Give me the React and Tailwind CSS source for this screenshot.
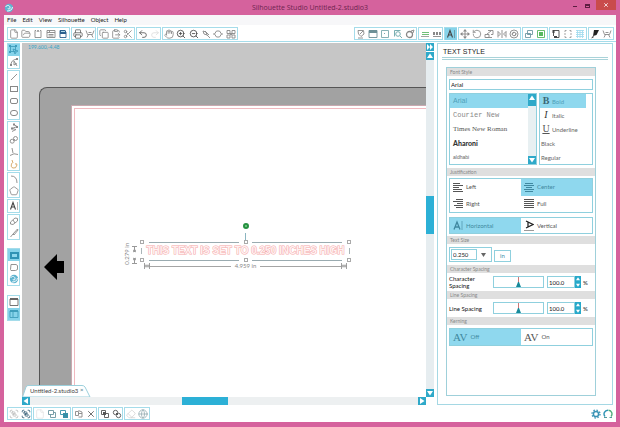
import React, { useState } from "react";
import {
  File, FolderOpen, Printer, Copy, ClipboardPaste, Scissors, Undo2, Redo2, Hand,
  ZoomIn, ZoomOut, RotateCcw, Pentagon, Group, Ungroup, X, Globe, Eraser,
} from "lucide-react";

const ui = "font-['Lato','Open_Sans',sans-serif]";

function Tool({ icon: Icon, label, on, tone = "text-[#888]", children }) {
  return (
    <button
      aria-label={label}
      className={`flex h-3 min-w-3 items-center justify-center ${tone} ${on ? "bg-[#86d3ea]" : ""}`}
    >
      {Icon ? <Icon size={10} strokeWidth={2} /> : children}
    </button>
  );
}

function Glyph({ d, fill, children }) {
  return (
    <svg width="10" height="10" viewBox="0 0 10 10" fill="none" stroke="currentColor" strokeWidth="0.900">
      {fill && <path d={fill} fill="currentColor" stroke="none" />}
      {d && <path d={d} />}
      {children}
    </svg>
  );
}

function Bar({ width, children }) {
  return (
    <div className={`flex h-[13px] shrink-0 items-center justify-around border border-[#a5dcea] bg-white ${width}`}>
      {children}
    </div>
  );
}

function Stack({ children, className = "" }) {
  return <div className={`flex flex-col border border-[#a5dcea] bg-white ${className}`}>{children}</div>;
}

const Plotter = () => <Glyph d="M1 1.500l1.500 4h5l1.500-4M3.500 5.500L2 8.500M6.500 5.500L8 8.500M3.500 3.500h3" />;
const LetterTool = () => (
  <svg width="10" height="10" viewBox="0 0 10 10" fill="none" stroke="#444">
    <path d="M1.500 8.500L4 1.500l2.500 7M2.500 6h3" strokeWidth="1.100" />
    <path d="M8.500 1v8" strokeWidth="0.400" />
  </svg>
);
const Swirl = () => (
  <svg width="10" height="10" viewBox="0 0 10 10">
    <circle cx="5" cy="5" r="4.200" fill="#5fb4d0" />
    <path d="M1.500 4c2-3 5-1 4.500 1s-2 1-2 0M3 8c3 0 5-1 5.500-4" stroke="#fff" fill="none" strokeWidth="0.900" />
  </svg>
);

function TopTools() {
  return (
    <div className="flex h-[17px] shrink-0 items-start justify-between border-b border-[#a5dcea] pt-0.5 pr-0.5 pl-[3px]">
      <div className="flex gap-px">
        <Bar width="w-[63px]">
          <Tool icon={File} label="New" />
          <Tool icon={FolderOpen} label="Open" />
          <Tool label="Import"><Glyph d="M2 1.500h1M7 1.500h1v7H2v-7M4 3l1-2 1 2" /></Tool>
          <Tool label="Save"><Glyph d="M1 1.500h8v7H1zM1 3.500h8M2.500 5.500h5M2.500 7h5M3.500 1.500v2" /></Tool>
          <Tool label="Save to card" tone="text-[#2b5f8d]">
            <Glyph d="M2 1.500h4.500L8 3v5.500H2z" fill="M2 1h5l1 1v3H2z">
              <path d="M3 2.500h4" stroke="#bfe3f2" />
            </Glyph>
          </Tool>
        </Bar>
        <Bar width="w-[25px]">
          <Tool icon={Printer} label="Print" tone="text-[#666]" />
          <Tool label="Send to plotter"><Plotter /></Tool>
        </Bar>
        <Bar width="w-[38px]">
          <Tool icon={Copy} label="Copy" />
          <Tool icon={ClipboardPaste} label="Paste" />
          <Tool icon={Scissors} label="Cut" />
        </Bar>
        <Bar width="w-[25px]">
          <Tool icon={Undo2} label="Undo" tone="text-[#555]" />
          <Tool icon={Redo2} label="Redo" tone="text-[#ddd]" />
        </Bar>
        <Bar width="w-[76px]">
          <Tool icon={Hand} label="Pan" />
          <Tool icon={ZoomIn} label="Zoom in" tone="text-[#444]" />
          <Tool icon={ZoomOut} label="Zoom out" tone="text-[#444]" />
          <Tool label="Zoom selection"><Glyph d="M2 2l3 1 1 3-3-1zM6 6l3 3M4 2l4 4" /></Tool>
          <Tool label="Drag zoom"><Glyph d="M3.500 2h3l2 3-2 3h-3l-2-3zM1.500 5H0M10 5H8.500" /></Tool>
          <Tool label="Fit to window">
            <Glyph d="M1 1.500h3v3H1zM6 1.500h3v3H6zM1 6h3v3H1zM6 6h3v3H6zM4 4l2 2M6 4L4 6" />
          </Tool>
        </Bar>
      </div>
      <div className="flex gap-px">
        <Bar width="w-[63px]">
          <Tool label="Fill"><Glyph d="M2 1.500h5.500L8 5 5 7.500 2.500 5zM2 9h5M4 5l3-3" /></Tool>
          <Tool label="Page setup" tone="text-[#6d9097]"><Glyph d="M1 1.500h8v7H1z" fill="M1 1h8v3H1z" /></Tool>
          <Tool label="Grid" tone="text-[#7aa9ae]"><Glyph d="M1.500 1.500h7v7h-7z" fill="M4 4h1v1H4z" /></Tool>
          <Tool label="Trace" tone="text-[#6aa5a8]">
            <Glyph d="M1.500 1.500h6M1.500 1.500v6M7 7l2 2"><circle cx="5" cy="5" r="2.300" /></Glyph>
          </Tool>
          <Tool label="Offset"><Glyph d="M6 2l3-1-1 3"><circle cx="4.500" cy="5.500" r="3" strokeWidth="1.300" /></Glyph></Tool>
        </Bar>
        <Bar width="w-[25px]">
          <Tool label="Line color" tone="text-[#6fbf78]">
            <Glyph fill="M2 3h7v1H2zM2 5h7v1H2z"><path d="M1 7.500h8" stroke="#999" /></Glyph>
          </Tool>
          <Tool label="Line style"><Glyph d="M1 7.500h8" fill="M1 3h2v3H1zM4 3h2v3H4zM7 3h2v3H7z" /></Tool>
        </Bar>
        <Bar width="w-[13px]">
          <Tool label="Text style" on><LetterTool /></Tool>
        </Bar>
        <Bar width="w-[63px]">
          <Tool label="Move">
            <Glyph d="M5 2v6M2 5h6" fill="M5 0l2 2.500H3zM5 10l2-2.500H3zM0 5l2.500-2v4zM10 5L7.500 3v4z" />
          </Tool>
          <Tool icon={RotateCcw} label="Rotate" />
          <Tool label="Scale"><Glyph d="M1 5.500h4v3H1zM4 1.500h5v4H7M3 5l4-3M2 8.500h6" /></Tool>
          <Tool label="Align"><Glyph d="M1 2v6.500M9 2v6.500M5 1v8M1.500 3l2 2-2 2M8.500 3l-2 2 2 2" /></Tool>
          <Tool label="Replicate">
            <Glyph d="M3 5.500l2-2.500M5.500 7l2-2.500"><circle cx="5" cy="5" r="4" /><circle cx="5" cy="5" r="1.800" /></Glyph>
          </Tool>
        </Bar>
        <Bar width="w-[26px]">
          <Tool label="Modify" tone="text-[#6f98a4]"><Glyph d="M3.500 1.500h5v4h-5zM1.500 4.500h5v4h-5z" fill="M3.500 4.500h3v1h-3z" /></Tool>
          <Tool label="Nest" tone="text-[#58b85f]"><Glyph d="M1.500 1.500h7v7h-7z" fill="M3 3h4v4H3z" /></Tool>
        </Bar>
        <Bar width="w-[38px]">
          <Tool label="Registration" tone="text-[#444]"><Glyph d="M3 1.500h5v7H4M2.500 3v4" fill="M1.500 1h2v3h-2zM3 7h3v2H3z" /></Tool>
          <Tool label="Cut border" tone="text-[#999]"><Glyph d="M2 3V1.500h1.500M6.500 1.500H8V3M8 7v1.500H6.500M3.500 8.500H2V7M2 4v2M8 4v2" /></Tool>
          <Tool label="Grid settings" tone="text-[#a5dcee]">
            <Glyph d="M1 1.500h8M1 3.500h8M1 5.500h8M1 7.500h8M2.500 1v8M5 1v8M7.500 1v8" />
          </Tool>
        </Bar>
        <Bar width="w-[26px]">
          <Tool label="Cut settings" tone="text-[#222]"><Glyph fill="M4 1h5L6.500 6 3 7zM3 7l1 1-3 1.500z" /></Tool>
          <Tool label="Cut"><Plotter /></Tool>
        </Bar>
      </div>
    </div>
  );
}

function SideTools() {
  return (
    <div className="flex w-[18px] shrink-0 flex-col pr-[2px] pl-[3px]">
      <div className="flex w-[13px] flex-col gap-px">
        <Stack>
          <Tool label="Select" on tone="text-[#3f9dbb]">
            <Glyph d="M1.500 1.500h5v5h-5zM4 4l5 2-2 1-1 2z" fill="M0 0h2v2H0zM6 0h2v2H6zM0 6h2v2H0z" />
          </Tool>
          <Tool label="Edit points">
            <Glyph d="M2 8.500Q1.500 3 8 2M5 4l3 5M5 4v4l3-1.500" fill="M1 7h2v2H1zM7 1h2v2H7z" />
          </Tool>
        </Stack>
        <Stack>
          <Tool label="Line"><Glyph d="M2 8l6-6" /></Tool>
          <Tool label="Rectangle"><span className="h-[6px] w-2 border border-[#888]" /></Tool>
          <Tool label="Rounded rectangle"><span className="h-[6px] w-2 rounded-[2px] border border-[#888]" /></Tool>
          <Tool label="Ellipse"><span className="h-[6px] w-2 rounded-full border border-[#888]" /></Tool>
        </Stack>
        <Stack>
          <Tool label="Polygon"><Glyph d="M5 1.500l3 2-5 2 4 1-4 2" fill="M4 0.500h2v2H4zM7 3h2v2H7zM2 4.500h2v2H2z" /></Tool>
          <Tool label="Curve">
            <Glyph d="M4 5.500l2-1"><circle cx="3.200" cy="6.200" r="2" /><circle cx="6.500" cy="3.500" r="2" /></Glyph>
          </Tool>
          <Tool label="Freehand"><Glyph d="M3 1l1 5M1 8.500q4-3 8-1" /></Tool>
          <Tool label="Smooth freehand" tone="text-[#d3a05c]"><Glyph d="M3 1l1 3M3 4Q1 8 4 9t4-3q0-2-2-1" /></Tool>
        </Stack>
        <Stack>
          <Tool label="Arc"><Glyph d="M2 2q6 0 6 7" /></Tool>
          <Tool icon={Pentagon} label="Regular polygon" />
        </Stack>
        <Stack><Tool label="Text"><LetterTool /></Tool></Stack>
        <Stack>
          <Tool label="Eraser"><Glyph d="M1.500 6L6 2l2.500.5V5L4 8.500 1.500 8zM4 4l2 3" /></Tool>
          <Tool label="Knife"><Glyph d="M8.500 1L4 6l1 1 4-5zM4 6L1.500 9" /></Tool>
        </Stack>
        <Stack className="mt-[7px]">
          <Tool label="Page view" on>
            <span className="h-[7px] w-[9px] border-2 border-[#2f93b5] bg-[#8fd8ee]" />
          </Tool>
          <Tool label="Library"><Glyph d="M2 2.500h5l1.500 1v4l-2 1H2l-.5-1z" /></Tool>
          <Tool label="Store"><Swirl /></Tool>
        </Stack>
        <Stack className="mt-2">
          <Tool label="Single window" tone="text-[#666]"><Glyph d="M1 2h8v6.500H1z" fill="M1 1h8v2H1z" /></Tool>
          <Tool label="Split window" on tone="text-[#3f9dbb]"><Glyph d="M1 2h8v6.500H1zM4 2v6" fill="M1 1h8v2H1z" /></Tool>
        </Stack>
      </div>
    </div>
  );
}

const Handle = () => <span className="h-1 w-1 border border-[#aaa] bg-white" />;

function HandleRow() {
  return (
    <div className="flex items-center justify-between">
      <Handle />
      <span className="h-px w-[90px] bg-[#9aabb0]" />
      <Handle />
      <span className="h-px w-[90px] bg-[#9aabb0]" />
      <Handle />
    </div>
  );
}

const ArrowEnd = () => (
  <svg width="6" height="6" viewBox="0 0 6 6" fill="none" stroke="#888" className="shrink-0">
    <path d="M0.500 0v6M5.500 0v6M0.500 3h5M2 1.500v3M4 1.500v3" strokeWidth="0.800" />
  </svg>
);

function Selection() {
  return (
    <div className="absolute top-[180px] left-[101px] flex gap-[3px]">
      <div className="flex items-end gap-px pb-[5px] text-[6px] leading-[8px] text-[#888]">
        <span className="rotate-180 [writing-mode:vertical-rl]">0.279 in</span>
        <svg width="5" height="20" viewBox="0 0 5 20" fill="none" stroke="#999">
          <path d="M0 1.500h5M0 18.500h5M2.500 2v5M2.500 13v5M1 5l3 2M4 5L1 7M1 13l3 2M4 13l-3 2" />
        </svg>
      </div>
      <div className="flex w-[211px] flex-col">
        <span className="mx-auto h-[6px] w-[6px] rounded-full border-2 border-[#259140] bg-[#7fd08f]" />
        <span className="mx-auto mt-1 h-2 w-px bg-[#8ab5c0]" />
        <div className="mt-[-1px]"><HandleRow /></div>
        <div className="flex h-[14px] items-center justify-between px-px">
          <span className="h-[6px] w-px bg-[#aab5b8]" />
          <span className="font-['Liberation_Sans',Arial,sans-serif] text-[10px] leading-[14px] font-bold whitespace-nowrap text-[#fff1f1] [-webkit-text-stroke:1px_#f5a8a8] [paint-order:stroke_fill]">
            THIS TEXT IS SET TO 0.250 INCHES HIGH
          </span>
          <span className="h-[6px] w-px bg-[#aab5b8]" />
        </div>
        <HandleRow />
        <div className="mx-1 flex items-center text-[6px] leading-[8px] text-[#888]">
          <ArrowEnd />
          <span className="h-px flex-1 bg-[#a5a5a5]" />
          <span className="px-1">4.959 in</span>
          <span className="h-px flex-1 bg-[#a5a5a5]" />
          <ArrowEnd />
        </div>
      </div>
    </div>
  );
}

function ScrollButton({ label, d }) {
  return (
    <button aria-label={label} className="flex h-2 w-2 shrink-0 items-center justify-center bg-[#2fa9c9]">
      <svg width="6" height="6" viewBox="0 0 6 6" fill="#fff"><path d={d} /></svg>
    </button>
  );
}
const UP = "M3 0.500L6 5H0z";
const DOWN = "M3 5.500L0 1h6z";
const LEFT = "M0.500 3L5 0v6z";
const RIGHT = "M5.500 3L1 0v6z";

function Workspace() {
  return (
    <main className="flex min-w-0 flex-1 flex-col">
      <div className="flex min-h-0 flex-1">
        <div className="relative min-w-0 flex-1 overflow-hidden bg-[#c6c6c6] pt-11 pl-[17px]">
          <span className="absolute top-px left-[6px] text-[5px] leading-[6px] text-[#35a5c6]">199.600,-4.48</span>
          <div className="h-full rounded-tl-[8px] border-t border-l border-[#555] bg-[#a2a2a2] pt-[17px] pl-[31px]">
            <div className="h-full border-t border-l border-[#c9a9b0] bg-white pt-0.5 pl-0.5">
              <div className="h-full border-t border-l border-[#f2b9c0]" />
            </div>
          </div>
          <svg className="absolute top-[211px] left-[22px]" width="20" height="26" viewBox="0 0 20 26">
            <path d="M0 13L13 0v7h7v12h-7v7z" />
          </svg>
          <Selection />
          <div className="absolute bottom-0 left-0 h-3">
            <svg width="70" height="12" viewBox="0 0 70 12" className="block">
              <path d="M0.500 12L4 2q1-1.500 2-1.500h54q2 0 3 1.500l5 10z" fill="#fff" stroke="#9cd0dc" />
            </svg>
            <span className="absolute top-[2px] left-2 text-[6px] leading-2 whitespace-nowrap text-[#444]">
              Untitled-2.studio3
            </span>
            <button aria-label="Close tab" className="absolute top-[2px] left-[58px] text-[6px] leading-[6px] text-[#2b6c80]">×</button>
          </div>
        </div>
        <div className="flex w-2 shrink-0 flex-col bg-[#e6edf0]">
          <ScrollButton label="Collapse panel" d="M0 0l3 3-3 3zM3 0l3 3-3 3z" />
          <span className="h-px shrink-0 bg-white" />
          <ScrollButton label="Scroll up" d={UP} />
          <div className="flex flex-1 flex-col justify-center pb-5">
            <div className="h-[38px] bg-[#2cb0d6]" />
          </div>
          <ScrollButton label="Scroll down" d={DOWN} />
        </div>
      </div>
      <div className="mr-2 flex h-2 shrink-0 bg-[#edf0f1]">
        <ScrollButton label="Scroll left" d={LEFT} />
        <div className="flex flex-1 justify-center pr-[38px]">
          <div className="w-[46px] bg-[#2cb0d6]" />
        </div>
        <ScrollButton label="Scroll right" d={RIGHT} />
      </div>
    </main>
  );
}

function Heading({ children }) {
  return <h2 className="h-2 bg-[#dfdfdf] px-[3px] text-[5px] leading-2 text-[#888]">{children}</h2>;
}

function Choice({ on, onClick, children }) {
  return (
    <button
      aria-pressed={on}
      onClick={onClick}
      className={`flex h-full w-full items-center gap-[3px] px-[3px] text-[6px] leading-2 ${on ? "bg-[#8fd8ee] text-[#3f88a0]" : "text-[#555]"}`}
    >
      {children}
    </button>
  );
}

function Lines({ d }) {
  return (
    <svg width="10" height="11" viewBox="0 0 10 11" fill="none" stroke="currentColor" className="shrink-0">
      <path d={d} />
    </svg>
  );
}

function SpacingRow({ id, label }) {
  return (
    <div className="flex h-[18px] items-center pl-0.5 text-[6px] leading-[7px] text-[#111]">
      <label htmlFor={id} className="w-11 shrink-0 pr-2">{label}</label>
      <input
        id={id}
        type="range"
        defaultValue="50"
        className="h-3 w-[51px] shrink-0 appearance-none border border-[#8fd0de] bg-white [&::-webkit-slider-thumb]:h-[10px] [&::-webkit-slider-thumb]:w-[5px] [&::-webkit-slider-thumb]:appearance-none [&::-webkit-slider-thumb]:bg-linear-to-b [&::-webkit-slider-thumb]:from-[#c77] [&::-webkit-slider-thumb]:from-50% [&::-webkit-slider-thumb]:to-[#178a9a] [&::-webkit-slider-thumb]:to-50% [&::-webkit-slider-thumb]:[clip-path:polygon(40%_0,60%_0,60%_50%,100%_100%,0_100%,40%_50%)]"
      />
      <input
        aria-label={`${label} value`}
        defaultValue="100.0"
        className="ml-[3px] h-3 w-7 shrink-0 border border-[#8fd0de] px-px text-[6px]"
      />
      <div className="flex flex-col">
        {[["Increase", UP], ["Decrease", DOWN]].map(([n, d]) => (
          <button key={n} aria-label={`${n} ${label}`} className="flex h-[6px] w-[6px] items-center justify-center bg-[#27a9ca]">
            <svg width="4" height="4" viewBox="0 0 6 6" fill="#fff"><path d={d} /></svg>
          </button>
        ))}
      </div>
      <span className="ml-0.5">%</span>
    </div>
  );
}

const fonts = [
  ["Arial", "font-['Liberation_Sans'] text-[7px]"],
  ["Courier New", "font-['Liberation_Mono'] text-[7px] text-[#888]"],
  ["Times New Roman", "font-['Liberation_Serif'] text-[7px] text-[#555]"],
  ["Aharoni", "font-['Lato'] text-[7px] font-black text-[#333]"],
  ["aldhabi", "font-['Liberation_Sans'] text-[5px] text-[#666]"],
];

const pairBox = "grid grid-cols-2 border border-[#8fd0de]";

function TextPanel() {
  const [justify, setJustify] = useState("Center");
  const [flow, setFlow] = useState("Horizontal");
  const [kern, setKern] = useState("Off");
  const marks = {
    Left: "M0 1.500h7M0 3.500h10M0 5.500h6M0 7.500h9M0 9.500h10",
    Center: "M1 1.500h8M0 3.500h10M2 5.500h6M0 7.500h10M1 9.500h8",
    Right: "M3 1.500h7M0 3.500h10M4 5.500h6M1 7.500h9M3 9.500h7",
    Full: "M0 1.500h10M0 3.500h10M0 5.500h10M0 7.500h10M0 9.500h10",
  };
  return (
    <aside className="mr-[3px] ml-[3px] flex w-[176px] shrink-0 flex-col border border-[#a5d8e4]">
      <h1 className="mx-1 h-4 border-b-3 border-double border-[#a9d3d9] px-px pt-px font-['Liberation_Sans',Arial,sans-serif] text-[7px] leading-[14px] text-[#222]">
        TEXT STYLE
      </h1>
      <div className="mt-[7px] mr-4 mb-2 ml-2 flex flex-1 flex-col border border-[#9fd0da]">
        <Heading>Font Style</Heading>
        <div className="flex flex-col gap-[3px] px-0.5 py-[3px]">
          <input
            aria-label="Font name"
            defaultValue="Arial"
            className="h-[11px] border border-[#8fd0de] px-px text-[6px] text-[#111]"
          />
          <div className="flex justify-between">
            <div className="flex w-[88px] border border-[#8fd0de]">
              <div className="flex flex-1 flex-col">
                {fonts.map(([name, cls], i) => (
                  <button
                    key={name}
                    className={`h-[14px] px-[3px] text-left leading-[14px] whitespace-nowrap ${cls} ${i === 0 ? "bg-[#8fd8ee] text-[#4e9fb9]" : ""}`}
                  >
                    {name}
                  </button>
                ))}
              </div>
              <div className="flex w-2 flex-col justify-between bg-[#e8f0f2]">
                <div className="bg-[#2fa9c9] pb-1"><ScrollButton label="Fonts up" d={UP} /></div>
                <ScrollButton label="Fonts down" d={DOWN} />
              </div>
            </div>
            <div className="flex w-[54px] flex-col border border-[#8fd0de] text-[6px] text-[#666]">
              <button className="mr-[6px] flex h-[14px] items-center gap-0.5 bg-[#8fd8ee] px-0.5 text-[#4e9fb9]">
                <span className="w-2 font-['Liberation_Serif'] text-[10px] leading-3 font-bold text-[#3d6876]">B</span>Bold
              </button>
              <button className="flex h-[14px] items-center gap-0.5 px-0.5">
                <span className="w-2 text-center font-['Liberation_Serif'] text-[10px] leading-3 text-[#333] italic">I</span>Italic
              </button>
              <button className="flex h-[14px] items-center gap-0.5 px-0.5">
                <span className="w-2 font-['Liberation_Serif'] text-[10px] leading-3 text-[#555] underline">U</span>Underline
              </button>
              <button className="h-[14px] px-px text-left">Black</button>
              <button className="h-[14px] px-px text-left">Regular</button>
            </div>
          </div>
        </div>
        <Heading>Justification</Heading>
        <div className="flex flex-col gap-1 px-0.5 py-0.5">
          <div className={`${pairBox} h-[35px] grid-rows-2`}>
            {["Left", "Center", "Right", "Full"].map((n) => (
              <Choice key={n} on={justify === n} onClick={() => setJustify(n)}>
                <Lines d={marks[n]} />{n}
              </Choice>
            ))}
          </div>
          <div className={`${pairBox} h-[17px]`}>
            {["Horizontal", "Vertical"].map((n) => (
              <Choice key={n} on={flow === n} onClick={() => setFlow(n)}>
                <svg width="10" height="11" viewBox="0 0 10 11" fill="none" stroke="currentColor" className="shrink-0">
                  {n === "Horizontal"
                    ? <><path d="M1 9.500L4 2l3 7.500M2 7h4" strokeWidth="1.300" /><path d="M9 1v9" strokeWidth="0.600" /></>
                    : <><path d="M2 1l7 3.500L2 8M4 2v5" stroke="#222" strokeWidth="1.300" /><path d="M0 10.500h10" strokeWidth="0.600" /></>}
                </svg>
                {n}
              </Choice>
            ))}
          </div>
        </div>
        <Heading>Text Size</Heading>
        <div className="flex items-end gap-0.5 px-0.5 pt-[3px] pb-[3px]">
          <div className="flex h-[15px] w-[43px] items-center border border-[#8fd0de] p-px">
            <input aria-label="Text size" defaultValue="0.250" className="h-[11px] w-[26px] border border-[#8fd0de] px-px text-[6px] text-[#222]" />
            <button aria-label="Choose size" className="flex flex-1 justify-center">
              <svg width="5" height="4" viewBox="0 0 5 4" fill="#666"><path d="M0 0h5L2.500 4z" /></svg>
            </button>
          </div>
          <button className="h-3 w-[17px] border border-[#8fd0de] text-[6px] leading-[10px] text-[#3a8ca8]">in</button>
        </div>
        <Heading>Character Spacing</Heading>
        <SpacingRow id="character-spacing" label="Character Spacing" />
        <Heading>Line Spacing</Heading>
        <SpacingRow id="line-spacing" label="Line Spacing" />
        <Heading>Kerning</Heading>
        <div className="px-0.5 pt-[3px]">
          <div className={`${pairBox} h-[18px]`}>
            {["Off", "On"].map((n) => (
              <Choice key={n} on={kern === n} onClick={() => setKern(n)}>
                <span className="font-['Liberation_Serif'] text-[11px]">AV</span>{n}
              </Choice>
            ))}
          </div>
        </div>
      </div>
    </aside>
  );
}

function BottomTools() {
  return (
    <footer className="flex h-[17px] shrink-0 items-center justify-between pr-0.5 pl-[3px]">
      <div className="flex gap-px">
        <Bar width="w-[25px]">
          <Tool icon={Group} label="Group" tone="text-[#bbb]" />
          <Tool icon={Group} label="Ungroup" tone="text-[#2d5870]" />
        </Bar>
        <Bar width="w-[38px]">
          <Tool icon={File} label="Select all" tone="text-[#e5e5e5]" />
          <Tool label="Bring to front" tone="text-[#6b949f]"><Glyph d="M1.500 1.500h5v4h-5zM3.500 5.500v3h5v-5h-2" /></Tool>
          <Tool label="Send to back" tone="text-[#3790a8]"><Glyph d="M1.500 1.500h5v4h-5z" fill="M4 4h5v5H4z" /></Tool>
        </Bar>
        <Bar width="w-[25px]">
          <Tool label="Duplicate"><Glyph d="M1.500 2.500h3v4h-3zM4.500 1.500L8 3v5H4.500M4.500 4.500H8" /></Tool>
          <Tool icon={X} label="Delete" tone="text-[#555]" />
        </Bar>
        <Bar width="w-[25px]">
          <Tool label="Weld" tone="text-[#555]"><Glyph d="M1.500 1.500h4v4h-4zM4.500 4.500h4v4h-4z" fill="M3 3h3v3H3z" /></Tool>
          <Tool label="Subtract" tone="text-[#555]">
            <Glyph fill="M4 4h2v2H4z"><circle cx="3.500" cy="3.500" r="2.200" /><circle cx="6.500" cy="6.500" r="2.200" /></Glyph>
          </Tool>
        </Bar>
        <Bar width="w-[26px]">
          <Tool icon={Eraser} label="Offset path" tone="text-[#d5d5d5]" />
          <Tool icon={Globe} label="Release" tone="text-[#9ab0b5]" />
        </Bar>
      </div>
      <div className="flex">
        <Tool label="Preferences" tone="text-[#3a93b5]">
          <Glyph>
            <circle cx="5" cy="5" r="2.600" strokeWidth="1.500" />
            <circle cx="5" cy="5" r="4" strokeWidth="1.300" strokeDasharray="1.500 1.640" />
          </Glyph>
        </Tool>
        <Tool label="Themes">
          <Glyph>
            <path d="M2 7.500A3.800 3.800 0 0 1 5 1.200" stroke="#2f93b5" strokeWidth="1.400" />
            <path d="M5.500 1.200A3.800 3.800 0 0 1 8 7.500" stroke="#4fae7b" strokeWidth="1.400" />
            <path d="M1 8.500h3M6.500 8.500H9" stroke="#3d8f90" />
          </Glyph>
        </Tool>
      </div>
    </footer>
  );
}

export default function App() {
  return (
    <div className={`flex h-screen flex-col overflow-hidden bg-[#d5629d] px-1 pb-[5px] ${ui}`}>
      <header className="flex h-[15px] shrink-0 items-center">
        <div className="flex flex-1"><Swirl /></div>
        <div className="font-['Open_Sans',sans-serif] text-[7px] leading-[15px] text-[#6e2550]">Silhouette Studio Untitled-2.studio3</div>
        <div className="flex flex-1 items-start justify-end self-stretch text-[#5e1d42]">
          <button aria-label="Minimize" className="flex h-3 w-3 items-center justify-center"><span className="h-px w-1 bg-current" /></button>
          <button aria-label="Maximize" className="flex h-[11px] w-3 items-center justify-center"><span className="h-1 w-[5px] border border-t-2 border-current" /></button>
          <button aria-label="Close" className="ml-[3px] flex h-[10px] w-5 items-center justify-center bg-[#c94b4b] text-white"><X size={6} strokeWidth={3} /></button>
        </div>
      </header>
      <div className="flex min-h-0 flex-1 flex-col bg-white">
        <nav className="flex h-[10px] shrink-0 items-center gap-[6px] bg-[#f7f7f9] px-[3px] text-[6px] leading-[10px] text-[#222]">
          {["File", "Edit", "View", "Silhouette", "Object", "Help"].map((m) => <button key={m}>{m}</button>)}
        </nav>
        <TopTools />
        <div className="flex min-h-0 flex-1 pt-px">
          <SideTools />
          <Workspace />
          <TextPanel />
        </div>
        <BottomTools />
      </div>
    </div>
  );
}
